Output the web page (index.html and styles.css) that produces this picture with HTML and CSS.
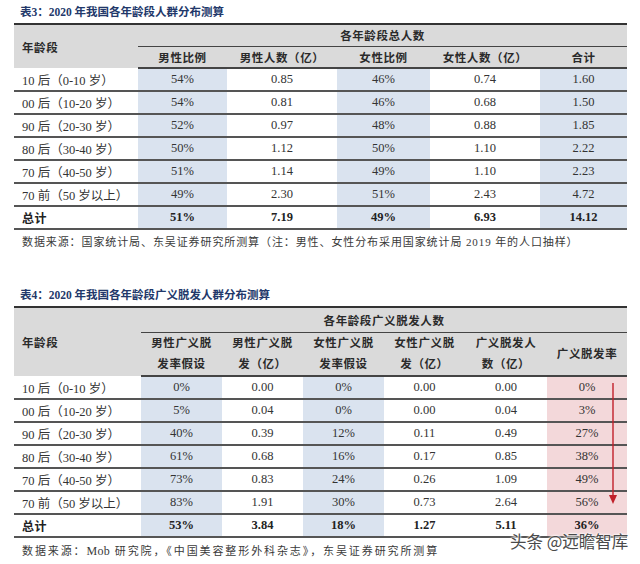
FILE: index.html
```html
<!DOCTYPE html>
<html lang="zh">
<head>
<meta charset="utf-8">
<link rel="stylesheet" href="styles.css">
</head>
<body>
<div class="page">
  <div class="title">表3：2020 年我国各年龄段人群分布测算</div>
  <table class="tbl t1">
    <colgroup>
      <col class="c-age1"><col class="c89"><col class="c110"><col class="c93"><col class="c110"><col class="c87">
    </colgroup>
    <thead>
      <tr class="h1">
        <th class="age" rowspan="2">年龄段</th>
        <th class="group" colspan="5">各年龄段总人数</th>
      </tr>
      <tr class="h2">
        <th>男性比例</th><th>男性人数（亿）</th><th>女性比例</th><th>女性人数（亿）</th><th>合计</th>
      </tr>
    </thead>
    <tbody>
      <tr><td class="lbl">10 后（0-10 岁）</td><td class="b">54%</td><td>0.85</td><td class="b">46%</td><td>0.74</td><td class="b">1.60</td></tr>
      <tr><td class="lbl">00 后（10-20 岁）</td><td class="b">54%</td><td>0.81</td><td class="b">46%</td><td>0.68</td><td class="b">1.50</td></tr>
      <tr><td class="lbl">90 后（20-30 岁）</td><td class="b">52%</td><td>0.97</td><td class="b">48%</td><td>0.88</td><td class="b">1.85</td></tr>
      <tr><td class="lbl">80 后（30-40 岁）</td><td class="b">50%</td><td>1.12</td><td class="b">50%</td><td>1.10</td><td class="b">2.22</td></tr>
      <tr><td class="lbl">70 后（40-50 岁）</td><td class="b">51%</td><td>1.14</td><td class="b">49%</td><td>1.10</td><td class="b">2.23</td></tr>
      <tr><td class="lbl">70 前（50 岁以上）</td><td class="b">49%</td><td>2.30</td><td class="b">51%</td><td>2.43</td><td class="b">4.72</td></tr>
      <tr class="total"><td class="lbl">总计</td><td class="b">51%</td><td>7.19</td><td class="b">49%</td><td>6.93</td><td class="b">14.12</td></tr>
    </tbody>
  </table>
  <div class="src">数据来源：国家统计局、东吴证券研究所测算（注：男性、女性分布采用国家统计局 2019 年的人口抽样）</div>

  <div class="title t2title">表4：2020 年我国各年龄段广义脱发人群分布测算</div>
  <div class="wrap">
    <table class="tbl t2">
      <colgroup>
        <col class="c-age2"><col class="c81"><col class="c81"><col class="c81"><col class="c81"><col class="c82"><col class="c80">
      </colgroup>
      <thead>
        <tr class="h1b">
          <th class="age" rowspan="2">年龄段</th>
          <th class="group" colspan="6">各年龄段广义脱发人数</th>
        </tr>
        <tr class="h2b">
          <th>男性广义脱<br>发率假设</th><th>男性广义脱<br>发（亿）</th><th>女性广义脱<br>发率假设</th><th>女性广义脱<br>发（亿）</th><th>广义脱发人<br>数（亿）</th><th>广义脱发率</th>
        </tr>
      </thead>
      <tbody>
        <tr><td class="lbl">10 后（0-10 岁）</td><td class="b">0%</td><td>0.00</td><td class="b">0%</td><td>0.00</td><td>0.00</td><td class="r">0%</td></tr>
        <tr><td class="lbl">00 后（10-20 岁）</td><td class="b">5%</td><td>0.04</td><td class="b">0%</td><td>0.00</td><td>0.04</td><td class="r">3%</td></tr>
        <tr><td class="lbl">90 后（20-30 岁）</td><td class="b">40%</td><td>0.39</td><td class="b">12%</td><td>0.11</td><td>0.49</td><td class="r">27%</td></tr>
        <tr><td class="lbl">80 后（30-40 岁）</td><td class="b">61%</td><td>0.68</td><td class="b">16%</td><td>0.17</td><td>0.85</td><td class="r">38%</td></tr>
        <tr><td class="lbl">70 后（40-50 岁）</td><td class="b">73%</td><td>0.83</td><td class="b">24%</td><td>0.26</td><td>1.09</td><td class="r">49%</td></tr>
        <tr><td class="lbl">70 前（50 岁以上）</td><td class="b">83%</td><td>1.91</td><td class="b">30%</td><td>0.73</td><td>2.64</td><td class="r">56%</td></tr>
        <tr class="total"><td class="lbl">总计</td><td class="b">53%</td><td>3.84</td><td class="b">18%</td><td>1.27</td><td>5.11</td><td class="r">36%</td></tr>
      </tbody>
    </table>
    <svg class="arrow" width="10" height="122" viewBox="0 0 10 122">
      <line x1="5" y1="0" x2="5" y2="114" stroke="#c0202a" stroke-width="1.4"/>
      <polygon points="1,112 9,112 5,121" fill="#c0202a"/>
    </svg>
  </div>
  <div class="src src2">数据来源：<span class="latin">Mob</span> 研究院，《中国美容整形外科杂志》，东吴证券研究所测算</div>
  <div class="watermark">头条 @远瞻智库</div>
</div>
</body>
</html>
```

FILE: styles.css
```css
* { box-sizing: border-box; }
html, body { margin: 0; padding: 0; background: #ffffff; }
body {
  width: 640px;
  height: 564px;
  overflow: hidden;
  font-family: "Liberation Serif", "Noto Sans CJK SC", serif;
  color: #2b2b2b;
}
.page {
  position: relative;
  padding: 5px 13px 0 14px;
}
.title {
  font-family: "Liberation Serif", "Noto Sans CJK SC", serif;
  font-weight: bold;
  font-size: 11.5px;
  color: #22386a;
  line-height: 14px;
  padding-left: 6px;
  height: 18px;
}
.tbl {
  width: 613px;
  border-collapse: collapse;
  table-layout: fixed;
  font-size: 12.5px;
}
.c-age1 { width: 124px; }
.c89 { width: 89px; }
.c110 { width: 110px; }
.c93 { width: 93px; }
.c87 { width: 87px; }
.c-age2 { width: 127px; }
.c81 { width: 81px; }
.c82 { width: 82px; }
.c80 { width: 80px; }
.tbl thead tr { background: #dadada; }
.tbl thead tr:first-child th { border-top: 2px solid #333; }
.tbl th {
  font-family: "Liberation Serif", "Noto Sans CJK SC", serif;
  font-weight: bold;
  font-size: 11.5px;
  letter-spacing: 0.6px;
  color: #2a2a2a;
  text-align: center;
  padding: 0;
}
.tbl th.age { text-align: left; padding-left: 8px; }
.tbl th.group { border-bottom: 1.5px solid #444; }
.tbl .h1 th { height: 22px; }
.tbl .h2 th { height: 22px; border-bottom: 2px solid #444; }
.tbl .h1b th { height: 25px; }
.tbl .h2b th { height: 44px; line-height: 21px; border-bottom: 2px solid #444; }
.tbl .h2b th:last-child { line-height: 14px; }
.tbl td {
  height: 23px;
  padding: 0;
  text-align: center;
  border-bottom: 2px solid #555;
  color: #333;
}
.tbl td.lbl { text-align: left; padding-left: 8px; }
.tbl td.b { background: #dae3ef; }
.tbl td.r { background: #f3d8da; }
.tbl tr.total td { font-weight: bold; color: #222; }
.tbl tr.total td.lbl { font-size: 12px; letter-spacing: 0.5px; }
.src {
  font-size: 11px;
  letter-spacing: 0.9px;
  color: #3a3a3a;
  padding-left: 8px;
  margin-top: 4px;
  line-height: 16px;
}
.t2title { margin-top: 38px; }
.wrap { position: relative; }
.arrow {
  position: absolute;
  left: 594px;
  top: 77px;
}
.src2 { margin-top: 5px; letter-spacing: 1.9px; }
.src2 .latin { letter-spacing: 0.3px; font-size: 12px; }
.watermark {
  position: absolute;
  left: 510px;
  top: 532px;
  font-family: "Noto Sans CJK SC", sans-serif;
  font-size: 16.5px;
  color: #4a4a4a;
  line-height: 18px;
  text-shadow: 0 0 2px #fff, 0 0 2px #fff, 0 0 3px #fff;
}
```
